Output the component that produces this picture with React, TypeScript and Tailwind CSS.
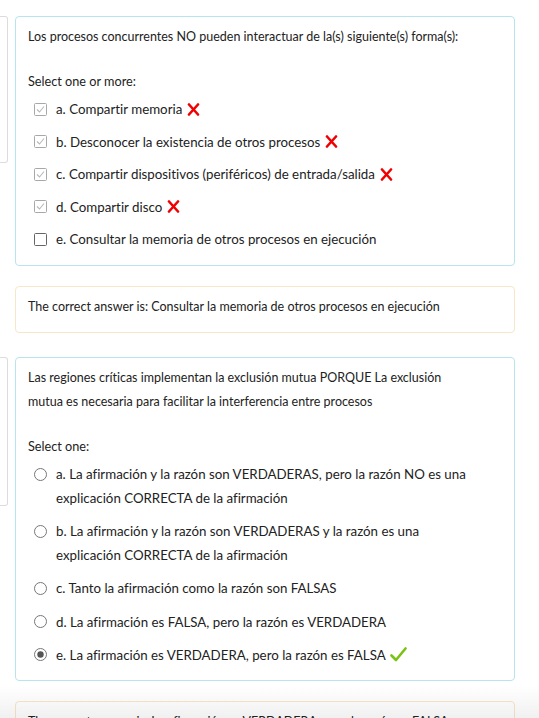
import React from "react";

const XMark = () => (
  <svg width="13" height="13" viewBox="0 0 13 13" className="inline-block ml-[5px] -mt-[3px] align-middle">
    <path d="M2 1.5 L11 11.5 M11 1.5 L2 11.5" stroke="#f00000" strokeWidth="2.6" strokeLinecap="round" fill="none" />
  </svg>
);

const Check = () => (
  <svg width="17" height="15" viewBox="0 0 17 15" className="inline-block ml-[4px] -mt-[3px] align-middle">
    <path d="M1.5 8.5 L6 13 L15.5 1.5" stroke="#7cc215" strokeWidth="2.6" strokeLinecap="round" strokeLinejoin="round" fill="none" />
  </svg>
);

const CheckBox = ({ checked }: { checked: boolean }) => (
  <div className="h-[24px] w-[13px] flex items-center">
    {checked ? (
      <svg width="13" height="13" viewBox="0 0 13 13">
        <rect x="0.5" y="0.5" width="12" height="12" rx="1" fill="#fff" stroke="#a8a8a8" />
        <path d="M3 6.5 L5.5 9 L10 3.5" stroke="#b8b8b8" strokeWidth="1.1" fill="none" />
      </svg>
    ) : (
      <svg width="13" height="13" viewBox="0 0 13 13">
        <rect x="0.5" y="0.5" width="12" height="12" rx="1" fill="#fff" stroke="#666" />
      </svg>
    )}
  </div>
);

const Radio = ({ checked }: { checked: boolean }) => (
  <div className="h-[24px] w-[13px] flex items-center">
    <svg width="13" height="13" viewBox="0 0 13 13">
      <circle cx="6.5" cy="6.5" r="6" fill="#fff" stroke="#777" />
      {checked && <circle cx="6.5" cy="6.5" r="3.2" fill="#555" />}
    </svg>
  </div>
);

type Opt = { text: React.ReactNode; checked: boolean; mark?: "x" | "check" };

const Option = ({ o, kind }: { o: Opt; kind: "check" | "radio" }) => (
  <div className={`flex items-start pl-[6px] ${kind === "check" ? "py-[4.25px]" : "py-[4.6px]"}`}>
    {kind === "check" ? <CheckBox checked={o.checked} /> : <Radio checked={o.checked} />}
    <div className="ml-[9px] flex-1 text-[13.3px] leading-[24px]">
      {o.text}
      {o.mark === "x" && <XMark />}
      {o.mark === "check" && <Check />}
    </div>
  </div>
);

const InfoStub = ({ h }: { h: string }) => (
  <div className={`w-[8px] shrink-0 border-y border-r border-[#dcdcdc] rounded-r-[3px] bg-white ${h}`} />
);

export default function App() {
  const q1: Opt[] = [
    { text: "a. Compartir memoria", checked: true, mark: "x" },
    { text: "b. Desconocer la existencia de otros procesos", checked: true, mark: "x" },
    { text: "c. Compartir dispositivos (periféricos) de entrada/salida", checked: true, mark: "x" },
    { text: "d. Compartir disco", checked: true, mark: "x" },
    { text: "e. Consultar la memoria de otros procesos en ejecución", checked: false },
  ];
  const q2: Opt[] = [
    {
      text: (
        <>
          a. La afirmación y la razón son VERDADERAS, pero la razón NO es una
          <br />
          explicación CORRECTA de la afirmación
        </>
      ),
      checked: false,
    },
    {
      text: (
        <>
          b. La afirmación y la razón son VERDADERAS y la razón es una
          <br />
          explicación CORRECTA de la afirmación
        </>
      ),
      checked: false,
    },
    { text: "c. Tanto la afirmación como la razón son FALSAS", checked: false },
    { text: "d. La afirmación es FALSA, pero la razón es VERDADERA", checked: false },
    { text: "e. La afirmación es VERDADERA, pero la razón es FALSA", checked: true, mark: "check" },
  ];

  return (
    <div className="relative h-[718px] overflow-hidden bg-white pt-4 font-['Lato',sans-serif] text-[12.5px] text-[#222] [font-variant-ligatures:none]">
      {/* Question 1 */}
      <div className="flex items-start gap-[7px]">
        <InfoStub h="h-[147px]" />
        <div className="w-[500px] rounded-[4px] border border-[#b6e5ef] px-3 pt-2 pb-[9px]">
          <div className="leading-[24px] mb-5">
            Los procesos concurrentes NO pueden interactuar de la(s) siguiente(s) forma(s):
          </div>
          <div className="leading-[24px] text-[12.7px]">Select one or more:</div>
          {q1.map((o, i) => (
            <Option key={i} o={o} kind="check" />
          ))}
        </div>
      </div>

      <div className="ml-[15px] mt-5 w-[500px] rounded-[4px] border border-[#f8e6c8] px-3 pt-2 pb-[13px]">
        <div className="leading-[24px]">
          The correct answer is: Consultar la memoria de otros procesos en ejecución
        </div>
      </div>

      {/* Question 2 */}
      <div className="mt-6 flex items-start gap-[7px]">
        <InfoStub h="h-[149px]" />
        <div className="w-[500px] rounded-[4px] border border-[#b6e5ef] px-3 pt-2 pb-[9px]">
          <div className="leading-[24px] mb-5">
            Las regiones críticas implementan la exclusión mutua PORQUE La exclusión
            <br />
            mutua es necesaria para facilitar la interferencia entre procesos
          </div>
          <div className="leading-[24px] text-[12.7px]">Select one:</div>
          {q2.map((o, i) => (
            <Option key={i} o={o} kind="radio" />
          ))}
        </div>
      </div>

      <div className="ml-[15px] mt-5 w-[500px] rounded-[4px] border border-[#f8e6c8] px-3 pt-2 pb-[13px]">
        <div className="leading-[24px]">
          The correct answer is: La afirmación es VERDADERA, pero la razón es FALSA
        </div>
      </div>

      <div className="pointer-events-none absolute inset-x-0 bottom-0 h-[32px] bg-gradient-to-b from-[rgba(0,0,0,0)] to-[rgba(0,0,0,0.06)]" />
    </div>
  );
}
